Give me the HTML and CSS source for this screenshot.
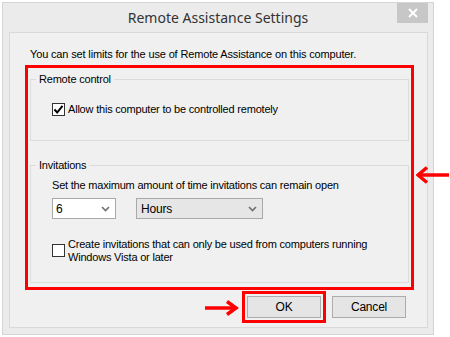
FILE: index.html
```html
<!DOCTYPE html>
<html>
<head>
<meta charset="utf-8">
<link rel="stylesheet" href="styles.css">
</head>
<body>
<div class="window">
  <div class="titlebar">
    <span class="title">Remote Assistance Settings</span>
    <div class="close">
      <svg width="10" height="10" viewBox="0 0 10 10"><path d="M1 1 L9 9 M9 1 L1 9" stroke="#fff" stroke-width="2" fill="none"/></svg>
    </div>
  </div>
  <div class="client">
    <p class="intro">You can set limits for the use of Remote Assistance on this computer.</p>
    <div class="highlight">
      <fieldset class="group g1">
        <legend>Remote control</legend>
        <label class="check c1">
          <span class="box"><svg width="11" height="11" viewBox="0 0 11 11"><path d="M1.5 5.5 L4.2 8.5 L9.5 1.8" stroke="#000" stroke-width="2" fill="none"/></svg></span>
          <span class="ctext">Allow this computer to be controlled remotely</span>
        </label>
      </fieldset>
      <fieldset class="group g2">
        <legend>Invitations</legend>
        <p class="setmax">Set the maximum amount of time invitations can remain open</p>
        <div class="selects">
          <div class="combo combo-num"><span>6</span>
            <svg class="chev" width="9" height="6" viewBox="0 0 9 6"><path d="M1 1 L4.5 4.5 L8 1" stroke="#707070" stroke-width="1.6" fill="none"/></svg>
          </div>
          <div class="combo combo-unit"><span>Hours</span>
            <svg class="chev" width="9" height="6" viewBox="0 0 9 6"><path d="M1 1 L4.5 4.5 L8 1" stroke="#707070" stroke-width="1.6" fill="none"/></svg>
          </div>
        </div>
        <label class="check c2">
          <span class="box"></span>
          <span class="ctext">Create invitations that can only be used from computers running<br>Windows Vista or later</span>
        </label>
      </fieldset>
    </div>
    <div class="buttons">
      <svg class="arrow-ok" width="34" height="16" viewBox="0 0 34 16"><path d="M0 8 L30 8" stroke="#f00" stroke-width="3.5"/><path d="M22 1.5 L31 8 L22 14.5" stroke="#f00" stroke-width="3.5" fill="none"/></svg>
      <div class="ok-wrap"><button class="btn">OK</button></div>
      <button class="btn cancel">Cancel</button>
    </div>
  </div>
</div>
<svg class="arrow-side" width="33" height="20" viewBox="0 0 33 20"><path d="M3 10 L33 10" stroke="#f00" stroke-width="3.5"/><path d="M11 2.5 L2 10 L11 17.5" stroke="#f00" stroke-width="3.5" fill="none"/></svg>
</body>
</html>
```

FILE: styles.css
```css
* { box-sizing: border-box; }
html, body { margin: 0; padding: 0; background: #fff; }
body {
  position: relative;
  width: 450px;
  height: 337px;
  overflow: hidden;
  font-family: "Liberation Sans", Arial, sans-serif;
  font-size: 11px;
  letter-spacing: -0.2px;
  color: #000;
}
.window {
  margin: 2px 0 0 2px;
  width: 432px;
  height: 333px;
  border: 1px solid #d4d4d4;
  background: #ebebeb;
  display: flex;
  flex-direction: column;
}
.titlebar {
  height: 29px;
  display: grid;
  grid-template-columns: 1fr auto 1fr;
  align-items: start;
}
.title {
  grid-column: 2;
  font-family: "Noto Sans", sans-serif;
  font-size: 14px;
  letter-spacing: 0;
  color: #333;
  line-height: 20px;
  margin-top: 5px;
}
.close {
  grid-column: 3;
  justify-self: end;
  margin-right: 5px;
  width: 31px;
  height: 20px;
  background: #c7c7c7;
  display: flex;
  align-items: center;
  justify-content: center;
}
.close svg { display: block; }
.client {
  margin: 0 5px 0 6px;
  height: 296px;
  border: 1px solid #d9d9d9;
  background: #f0f0f0;
  display: flex;
  flex-direction: column;
}
.intro {
  margin: 14px 0 0 20px;
  line-height: 15px;
  letter-spacing: -0.15px;
}
.highlight {
  margin: 3px 0 0 15px;
  width: 389px;
  height: 225px;
  border: 3px solid #f00;
  padding: 0 0 0 2px;
  display: flex;
  flex-direction: column;
}
.group {
  margin: 0;
  width: 379px;
  border: 1px solid #dcdcdc;
  padding: 0 0 0 21px;
  min-width: 0;
}
.group legend {
  padding: 0 3px;
  margin-left: -16px;
  line-height: 15px;
}
.g1 { margin-top: 4px; height: 69px; }
.g2 { margin-top: 17px; height: 125px; }
.check {
  display: flex;
  align-items: flex-start;
  gap: 3px;
  line-height: 13px;
}
.c1 { margin-top: 16px; }
.c1 .ctext { line-height: 15px; margin-top: -1px; }
.box {
  width: 13px;
  height: 13px;
  border: 1px solid #333;
  background: #fff;
  flex: none;
  display: flex;
  align-items: center;
  justify-content: center;
}
.box svg { display: block; }
.setmax {
  margin: 5px 0 0 0;
  line-height: 15px;
}
.selects {
  margin-top: 5px;
  display: flex;
  gap: 20px;
}
.combo {
  height: 21px;
  border: 1px solid #a9a9a9;
  display: flex;
  align-items: center;
  justify-content: space-between;
  padding: 0 5px 0 3px;
  font-size: 12px;
}
.combo-num { width: 64px; background: #fff; }
.combo-unit { width: 127px; background: #e6e6e6; padding-left: 4px; }
.chev { display: block; }
.c2 { margin-top: 19px; }
.c2 .box { margin-top: 6px; }
.c2 .ctext { line-height: 13px; }
.buttons {
  margin: 1px 0 0 0;
  padding-right: 21px;
  display: flex;
  justify-content: flex-end;
  align-items: center;
}
.arrow-ok { display: block; margin-right: 3px; margin-top: 1px; }
.ok-wrap {
  border: 3px solid #f00;
  padding: 2px;
}
.btn {
  display: block;
  width: 74px;
  height: 22px;
  margin: 0;
  padding: 0;
  border: 1px solid #acacac;
  background: #e5e5e5;
  font-family: "Liberation Sans", Arial, sans-serif;
  font-size: 12px;
  letter-spacing: -0.2px;
  color: #000;
}
.cancel { margin-left: 6px; }
.arrow-side {
  position: absolute;
  left: 416px;
  top: 165px;
}
```
